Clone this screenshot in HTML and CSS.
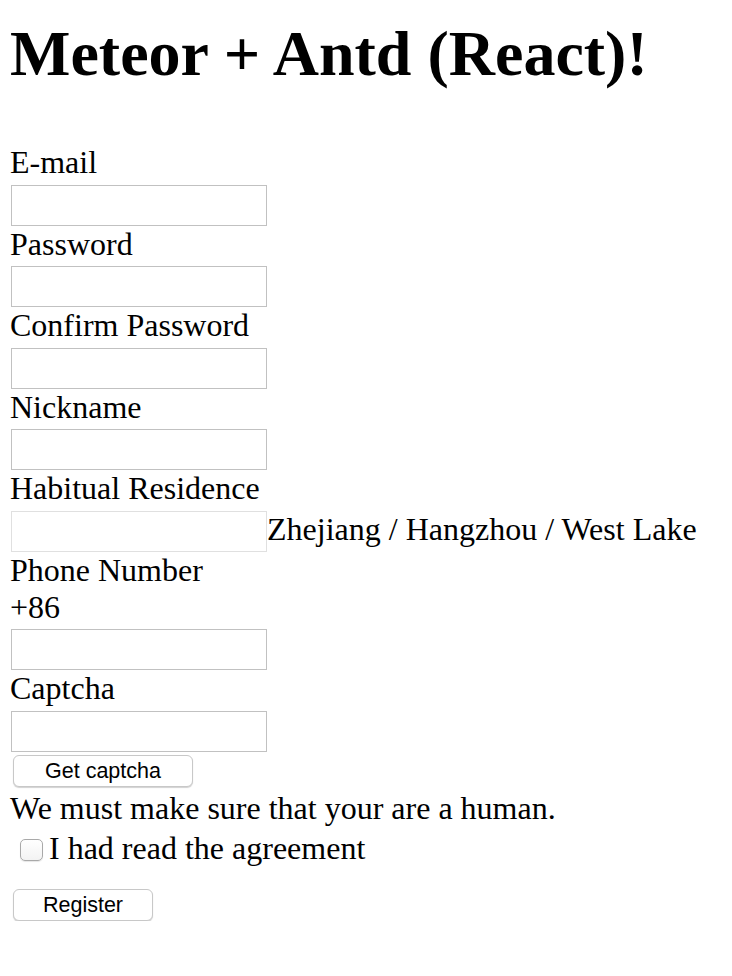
FILE: index.html
```html
<!DOCTYPE html>
<html lang="en">
<head>
<meta charset="utf-8">
<title>Meteor + Antd (React)!</title>
<link rel="stylesheet" href="styles.css">
</head>
<body class="page">
<h1 class="title">Meteor + Antd (React)!</h1>
<form class="register-form">
  <div class="field">
    <label class="field-label" for="email">E-mail</label>
    <input class="text-input" id="email" type="text">
  </div>
  <div class="field">
    <label class="field-label" for="password">Password</label>
    <input class="text-input" id="password" type="password">
  </div>
  <div class="field">
    <label class="field-label" for="confirm">Confirm Password</label>
    <input class="text-input" id="confirm" type="password">
  </div>
  <div class="field">
    <label class="field-label" for="nickname">Nickname</label>
    <input class="text-input" id="nickname" type="text">
  </div>
  <div class="field">
    <label class="field-label" for="residence">Habitual Residence</label>
    <div class="cascader">
      <input class="text-input text-input--muted" id="residence" type="text">
      <span class="cascader-value">Zhejiang / Hangzhou / West Lake</span>
    </div>
  </div>
  <div class="field">
    <label class="field-label" for="phone">Phone Number</label>
    <div class="prefix">+86</div>
    <input class="text-input" id="phone" type="text">
  </div>
  <div class="field">
    <label class="field-label" for="captcha">Captcha</label>
    <input class="text-input" id="captcha" type="text">
    <button type="button" class="btn btn--captcha">Get captcha</button>
  </div>
  <div class="help">We must make sure that your are a human.</div>
  <label class="agreement"><input type="checkbox" class="checkbox"><span class="agreement-text">I had read the agreement</span></label>
  <button type="submit" class="btn btn--register">Register</button>
</form>
</body>
</html>
```
FILE: styles.css
```css
html {
  background: #fff;
}

.page {
  margin: 0;
  padding: 17px 10px 0;
  font-family: "Liberation Serif", "Times New Roman", serif;
  font-size: 32px;
  line-height: normal;
  color: #000;
  background: #fff;
}

.title {
  margin: 0 0 53px;
  font-size: 64px;
  font-weight: bold;
  line-height: normal;
}

.register-form {
  margin: 0;
}

.field-label {
  display: block;
}

.text-input {
  display: block;
  box-sizing: border-box;
  width: 256px;
  height: 41px;
  margin: 3.5px 0 0 1px;
  padding: 0 4px;
  border: 1px solid #c1c1c1;
  border-radius: 0;
  background: #fff;
  font: inherit;
  outline: none;
}

.text-input--muted {
  border-color: #e0e0e0;
}

.cascader {
  display: flex;
  align-items: center;
  margin-top: 3.5px;
}

.cascader .text-input {
  margin: 0 0 0 1px;
  flex: none;
}

.cascader-value {
  white-space: nowrap;
  position: relative;
  top: -2px;
}

.btn {
  display: block;
  box-sizing: border-box;
  height: 32px;
  margin: 0 0 0 3px;
  padding: 0;
  font-family: "Liberation Sans", Arial, Helvetica, sans-serif;
  font-size: 21.5px;
  line-height: 30px;
  color: #000;
  background: #fff;
  border: 1px solid #c8c8c8;
  border-radius: 6px;
  box-shadow: 0 1px 1px rgba(0, 0, 0, 0.18);
  cursor: pointer;
}

.btn--captcha {
  width: 180px;
  margin-top: 3px;
}

.help {
  margin-top: 3px;
}

.agreement {
  display: block;
  margin-top: 3px;
}

.checkbox {
  -webkit-appearance: none;
  appearance: none;
  box-sizing: border-box;
  width: 23px;
  height: 22px;
  margin: 0 6px 0 10px;
  vertical-align: -2px;
  border: 1px solid #a9a9a9;
  border-radius: 5px;
  background: linear-gradient(#fff, #f3f3f3);
  box-shadow: 0 1px 1px rgba(0, 0, 0, 0.1);
}

.btn--register {
  width: 140px;
  margin-top: 22px;
}
```
